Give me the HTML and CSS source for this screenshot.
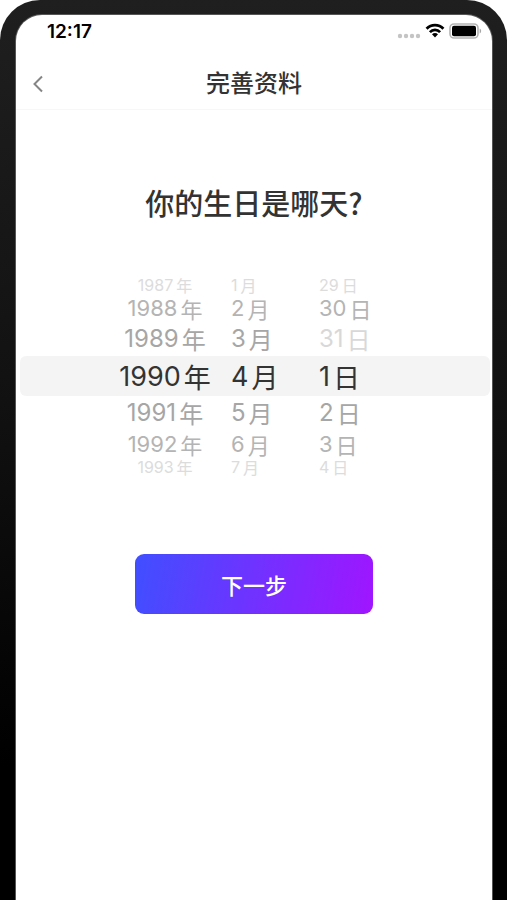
FILE: index.html
```html
<!DOCTYPE html>
<html lang="zh-CN">
<head>
<meta charset="utf-8">
<meta name="viewport" content="width=device-width, initial-scale=1">
<title>完善资料</title>
<link rel="stylesheet" href="styles.css">
</head>
<body>
<div class="phone">
  <div class="screen">
    <div class="status">
      <time class="clock">12:17</time>
      <div class="indicators">
        <svg class="dots" width="24" height="6" viewBox="0 0 24 6" aria-hidden="true"><g fill="#c4c4c4"><circle cx="3" cy="3" r="2.2"/><circle cx="9" cy="3" r="2.2"/><circle cx="15" cy="3" r="2.2"/><circle cx="21" cy="3" r="2.2"/></g></svg>
        <svg width="20" height="16" viewBox="0 0 20 16" aria-hidden="true"><g fill="none" stroke="#000" stroke-width="2.8"><path d="M1.600 5.700C6.200 .8 13.800 .8 18.400 5.700"/><path d="M4.900 9.100C7.700 6.200 12.300 6.200 15.100 9.100"/></g><path d="M7 11.200c1.700-1.500 4.300-1.500 6 0l-3 3.300z"/></svg>
        <svg width="33" height="16" viewBox="0 0 33 16" aria-hidden="true"><rect x="1" y="1" width="28" height="14" rx="4" fill="#fff" stroke="#b4b4b4" stroke-width="1.6"/><rect x="3" y="2.800" width="24" height="10.400" rx="2"/><path d="M30.700 5.500c1.900.8 1.900 4.200 0 5z" fill="#a6a6a6"/></svg>
      </div>
    </div>
    <header class="navbar">
      <button class="back" type="button" aria-label="返回"><svg width="12" height="18" viewBox="0 0 12 18" aria-hidden="true"><path d="M10 1.500 2.500 9l7.500 7.500" fill="none" stroke="#858585" stroke-width="2"/></svg></button>
      <h1 class="title">完善资料</h1>
    </header>
    <main class="content">
      <h2 class="question">你的生日是哪天?</h2>
      <div class="picker">
        <ul class="wheel year" role="listbox" aria-label="年">
          <li class="edge" role="option"><span>1987</span><span class="unit">年</span></li>
          <li class="far" role="option"><span>1988</span><span class="unit">年</span></li>
          <li class="near" role="option"><span>1989</span><span class="unit">年</span></li>
          <li class="current" role="option" aria-selected="true"><span>1990</span><span class="unit">年</span></li>
          <li class="near" role="option"><span>1991</span><span class="unit">年</span></li>
          <li class="far" role="option"><span>1992</span><span class="unit">年</span></li>
          <li class="edge" role="option"><span>1993</span><span class="unit">年</span></li>
        </ul>
        <ul class="wheel" role="listbox" aria-label="月">
          <li class="edge" role="option"><span>1</span><span class="unit">月</span></li>
          <li class="far" role="option"><span>2</span><span class="unit">月</span></li>
          <li class="near" role="option"><span>3</span><span class="unit">月</span></li>
          <li class="current" role="option" aria-selected="true"><span>4</span><span class="unit">月</span></li>
          <li class="near" role="option"><span>5</span><span class="unit">月</span></li>
          <li class="far" role="option"><span>6</span><span class="unit">月</span></li>
          <li class="edge" role="option"><span>7</span><span class="unit">月</span></li>
        </ul>
        <ul class="wheel" role="listbox" aria-label="日">
          <li class="edge" role="option"><span>29</span><span class="unit">日</span></li>
          <li class="far" role="option"><span>30</span><span class="unit">日</span></li>
          <li class="near unavailable" role="option" aria-disabled="true"><span>31</span><span class="unit">日</span></li>
          <li class="current" role="option" aria-selected="true"><span>1</span><span class="unit">日</span></li>
          <li class="near" role="option"><span>2</span><span class="unit">日</span></li>
          <li class="far" role="option"><span>3</span><span class="unit">日</span></li>
          <li class="edge" role="option"><span>4</span><span class="unit">日</span></li>
        </ul>
      </div>
      <button class="next" type="button">下一步</button>
    </main>
  </div>
</div>
</body>
</html>
```
FILE: styles.css
```css
* {
  box-sizing: border-box;
}

body {
  margin: 0;
  background: #fff;
  color: #333;
  font-family: Inter, "Noto Sans CJK SC", sans-serif;
}

.phone {
  min-height: 100vh;
  padding: 15px 15px 0 16px;
  border-radius: 40px 40px 0 0;
  background: linear-gradient(#1f1f1f, #111 45%, #000 85%);
  display: flex;
}

.screen {
  flex: 1;
  min-width: 0;
  border-radius: 26px 26px 0 0;
  background: #fff;
  box-shadow: 0 0 0 1px #555;
}

.status {
  display: flex;
  align-items: center;
  justify-content: space-between;
  height: 32px;
  padding: 0 10px 0 31px;
}

.clock {
  color: #000;
  font-size: 19px;
  font-weight: 600;
}

.indicators {
  display: flex;
  align-items: center;
  gap: 4px;
}

.dots {
  align-self: flex-end;
}

.navbar {
  display: grid;
  grid-template-columns: 48px 1fr 48px;
  align-items: center;
  height: 63px;
  padding-top: 12px;
  border-bottom: 1px solid #f7f7f7;
}

.back {
  display: flex;
  align-items: center;
  height: 44px;
  padding: 0 0 0 16px;
  border: 0;
  background: none;
}

.title {
  margin: 0;
  font-size: 24px;
  font-weight: 500;
  line-height: 32px;
  text-align: center;
}

.content {
  display: flex;
  flex-direction: column;
  align-items: center;
  padding-top: 72px;
}

.question {
  margin: 0;
  font-family: "Noto Sans CJK SC", sans-serif;
  font-size: 29px;
  font-weight: 500;
  line-height: 40px;
}

.picker {
  position: relative;
  isolation: isolate;
  align-self: stretch;
  display: grid;
  grid-template-columns: 128px 86px 90px;
  column-gap: 2px;
  justify-content: center;
  margin: 54px 2px 0 4px;
}

/* Highlight band behind the selected row */
.picker::before {
  content: "";
  position: absolute;
  inset: 80px 0;
  z-index: -1;
  border-radius: 6px;
  background: #f4f4f4;
}

.wheel {
  margin: 0;
  padding: 0;
  list-style: none;
}

.wheel li {
  display: flex;
  align-items: center;
  gap: 3px;
  color: #a6a6a6;
  line-height: 1;
  white-space: nowrap;
}

.unit {
  font-family: "Noto Sans CJK SC", sans-serif;
}

.year li {
  justify-content: center;
}

.wheel .current {
  height: 40px;
  color: #333;
  font-size: 27px;
}

.wheel .near {
  height: 34px;
  font-size: 24px;
}

.wheel .far {
  height: 28px;
  color: #b4b4b4;
  font-size: 22px;
}

.wheel .edge {
  height: 18px;
  color: #dcdcdc;
  font-size: 16px;
}

.wheel .unavailable {
  color: #d8d8d8;
}

.next {
  width: 50%;
  height: 60px;
  margin-top: 78px;
  border: 0;
  border-radius: 9px;
  background: linear-gradient(100deg, #404fff, #a015ff);
  color: #fff;
  font: 500 22px "Noto Sans CJK SC", sans-serif;
}
```
